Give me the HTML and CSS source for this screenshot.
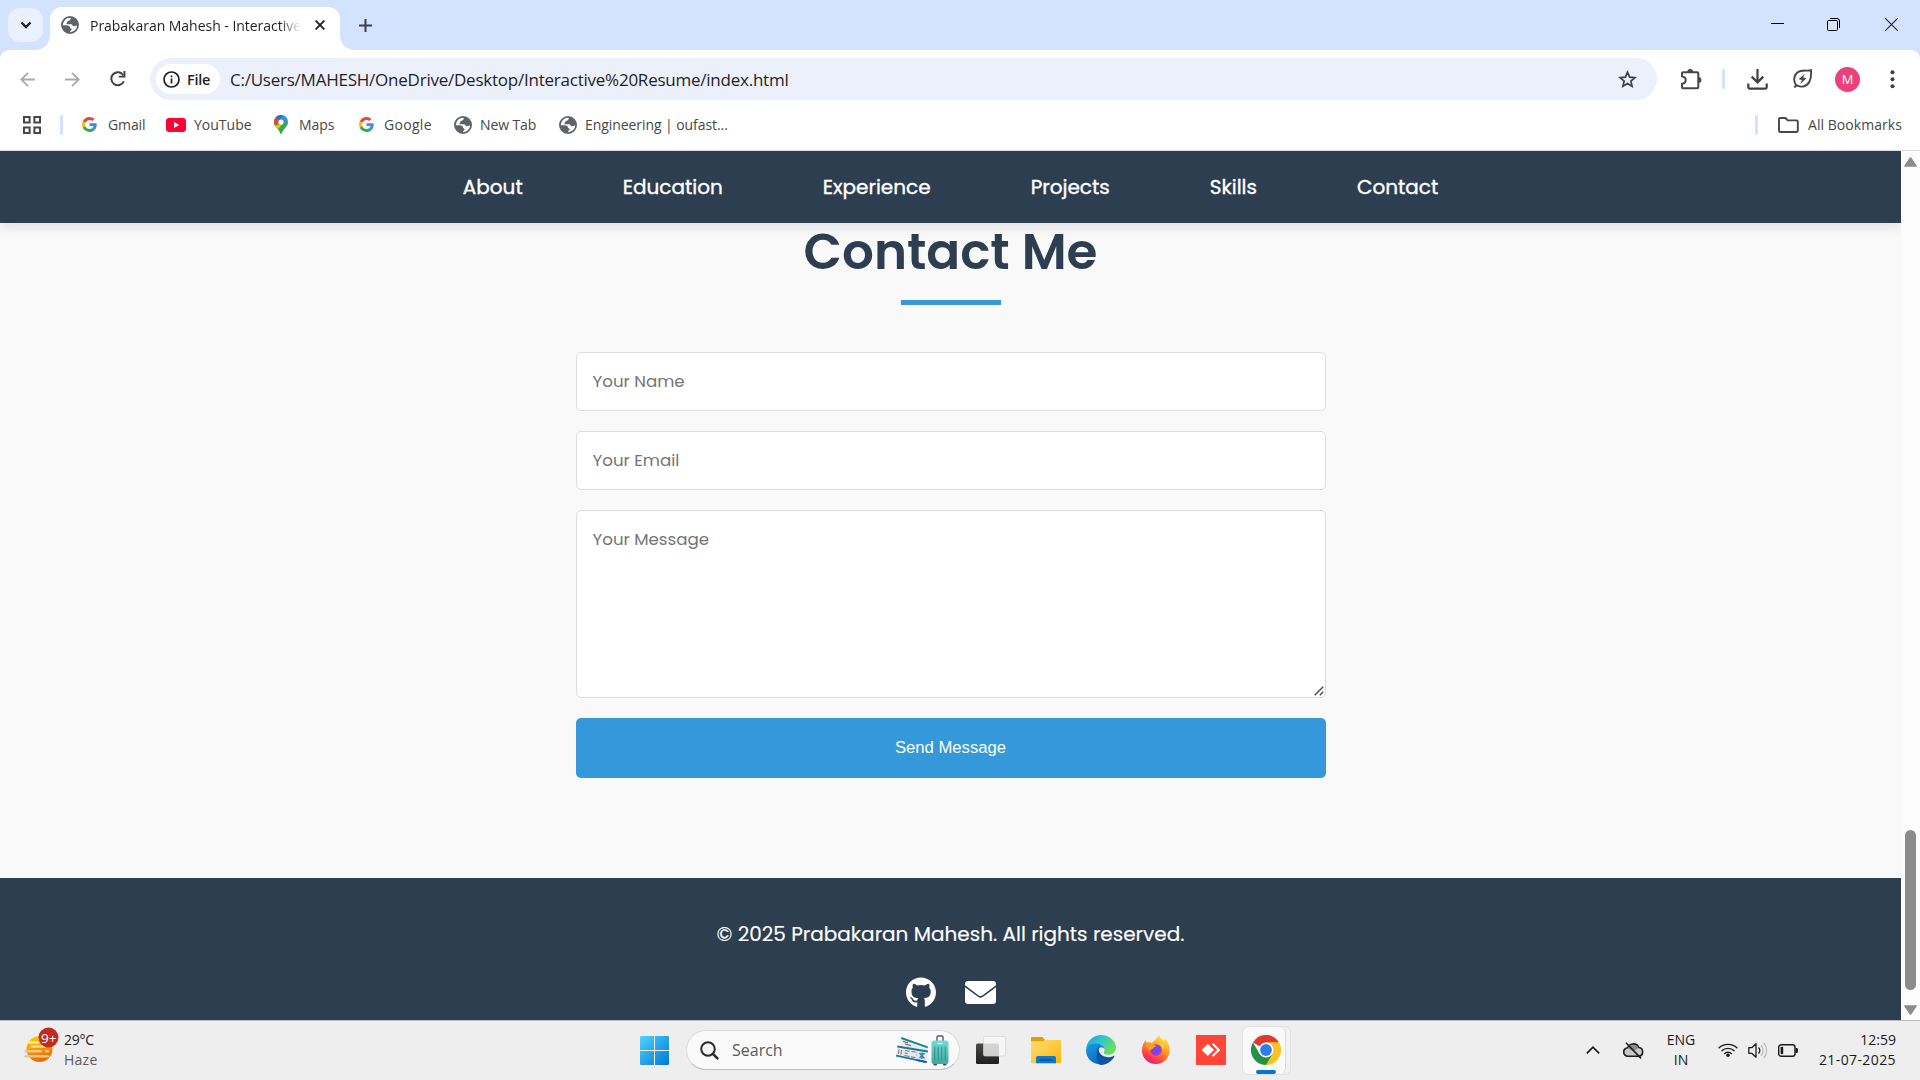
FILE: index.html
```html
<!DOCTYPE html>
<html lang="en">
<head>
<meta charset="utf-8">
<title>Prabakaran Mahesh - Interactive Resume</title>
<link rel="stylesheet" href="styles.css">
</head>
<body>
<svg width="0" height="0" class="defs" aria-hidden="true">
  <defs>
    <linearGradient id="win" x1="0" y1="0" x2="1" y2="1"><stop offset="0" stop-color="#4fd3ff"/><stop offset="1" stop-color="#0078d4"/></linearGradient>
    <linearGradient id="sun" x1="0" y1="0" x2="0.3" y2="1"><stop offset="0" stop-color="#ffd400"/><stop offset="1" stop-color="#ee6a00"/></linearGradient>
    <linearGradient id="fold" x1="0" y1="0" x2="1" y2="1"><stop offset="0" stop-color="#ffdd72"/><stop offset="1" stop-color="#fbb80f"/></linearGradient>
    <linearGradient id="edgeTop" x1="0" y1="0" x2="1" y2=".5"><stop offset="0" stop-color="#1e9fdc"/><stop offset=".5" stop-color="#31c4d0"/><stop offset="1" stop-color="#6be05a"/></linearGradient>
    <linearGradient id="edgeLeft" x1="0" y1="0" x2=".6" y2="1"><stop offset="0" stop-color="#1a9be2"/><stop offset="1" stop-color="#0c6cc4"/></linearGradient>
    <linearGradient id="fox" x1=".8" y1="0" x2=".3" y2="1"><stop offset="0" stop-color="#fff04a"/><stop offset=".45" stop-color="#ff9a1f"/><stop offset=".8" stop-color="#ff3b47"/><stop offset="1" stop-color="#e3168b"/></linearGradient>
    <radialGradient id="foxIn"><stop offset="0" stop-color="#6a4be0"/><stop offset="1" stop-color="#a336d6"/></radialGradient>
    <linearGradient id="dark" x1="0" y1="0" x2="0" y2="1"><stop offset="0" stop-color="#4a4a47"/><stop offset="1" stop-color="#1d1d1d"/></linearGradient>
    <linearGradient id="case" x1="0" y1="0" x2="0" y2="1"><stop offset="0" stop-color="#73dcd0"/><stop offset="1" stop-color="#3fa9a2"/></linearGradient>
    <symbol id="globe" viewBox="0 0 18 18">
      <circle cx="9" cy="9" r="8.100" fill="#fff" stroke="#5f6368" stroke-width="1.800"/>
      <path fill="#5f6368" d="M10 1 9.600 3C9.500 4.200 8 4.600 7 5 6 5.400 6.300 6.800 5.500 7.200 5 8 6 8.400 7.500 8.200H10C11.500 8.300 11.300 10.300 13 10.300 14.500 10.300 15 9.300 17 9.300A8 8 0 0 0 10 1zM1.200 9.300H5.500C8 9.300 9.200 10.500 9 12 11 12.300 11 14 9.800 14.500 9.300 15 9 16.500 8 17A8 8 0 0 1 1.200 9.300z"/>
    </symbol>
    <symbol id="google" viewBox="0 0 48 48">
      <path fill="#ea4335" d="M24 9.500c3.540 0 6.710 1.220 9.210 3.600l6.850-6.850C35.900 2.380 30.470 0 24 0 14.620 0 6.510 5.380 2.560 13.220l7.980 6.190C12.430 13.720 17.740 9.500 24 9.500z"/>
      <path fill="#4285f4" d="M46.980 24.550c0-1.570-.15-3.090-.38-4.550H24v9.020h12.940c-.58 2.960-2.260 5.480-4.780 7.180l7.730 6c4.510-4.180 7.090-10.360 7.090-17.650z"/>
      <path fill="#fbbc05" d="M10.530 28.590c-.48-1.450-.76-2.990-.76-4.590s.27-3.140.76-4.590l-7.980-6.190C.92 16.460 0 20.120 0 24c0 3.880.92 7.540 2.560 10.780l7.970-6.190z"/>
      <path fill="#34a853" d="M24 48c6.480 0 11.930-2.130 15.890-5.810l-7.730-6c-2.150 1.450-4.920 2.300-8.160 2.300-6.260 0-11.570-4.220-13.470-9.910l-7.980 6.190C6.510 42.620 14.620 48 24 48z"/>
    </symbol>
  </defs>
</svg>

<div class="browser">
  <div class="tabstrip">
    <button class="tab-search" aria-label="Search tabs"><svg width="12" height="8" viewBox="0 0 12 8"><path d="M1.500 1.500 6 6l4.500-4.500" fill="none" stroke="#1f1f1f" stroke-width="2.300"/></svg></button>
    <div class="tab">
      <svg width="18" height="18"><use href="#globe"/></svg>
      <span class="tab-title">Prabakaran Mahesh - Interactive</span>
      <svg width="10" height="10" viewBox="0 0 10 10"><path d="M.6.6l8.800 8.800M9.400.6.6 9.400" stroke="#1f1f1f" stroke-width="1.900"/></svg>
    </div>
    <svg class="new-tab" width="13" height="13" viewBox="0 0 13 13"><path d="M6.500 0v13M0 6.500h13" stroke="#3c3f43" stroke-width="2"/></svg>
    <div class="window-buttons">
      <svg width="13" height="13" viewBox="0 0 13 13"><path d="M0 5.500h13" stroke="#000"/></svg>
      <svg width="13" height="13" viewBox="0 0 13 13"><rect x=".5" y="2.500" width="10" height="10" rx="1.200" fill="none" stroke="#000"/><path d="M3 .5h7A2.500 2.500 0 0 1 12.500 3v7" fill="none" stroke="#000"/></svg>
      <svg width="13" height="13" viewBox="0 0 13 13"><path d="M.3.3l12.400 12.400M12.700.3.3 12.700" stroke="#222" stroke-width="1.100"/></svg>
    </div>
  </div>

  <div class="toolbar">
    <svg width="15" height="15" viewBox="0 0 15 15"><path d="M15 7.500H1.500M8 .8 1.300 7.500 8 14.200" fill="none" stroke="#a9abae" stroke-width="1.800"/></svg>
    <svg width="15" height="15" viewBox="0 0 15 15"><path d="M0 7.500h13.500M7 .8l6.700 6.700L7 14.200" fill="none" stroke="#a9abae" stroke-width="1.800"/></svg>
    <svg width="16" height="16" viewBox="0 0 16 16"><path d="M13.800 10.300A6.500 6.500 0 1 1 13.300 4.200" fill="none" stroke="#3c4043" stroke-width="2"/><path d="M15.400 0v6.600H8.800V4.700h4.700V0z" fill="#3c4043"/></svg>
    <div class="omnibox">
      <div class="chip">
        <svg width="17" height="17" viewBox="0 0 17 17"><circle cx="8.500" cy="8.500" r="7.500" fill="none" stroke="#1f1f1f" stroke-width="1.700"/><path d="M8.500 7.600v5M8.500 4.400v1.900" stroke="#1f1f1f" stroke-width="1.700"/></svg>
        <span>File</span>
      </div>
      <span class="url">C:/Users/MAHESH/OneDrive/Desktop/Interactive%20Resume/index.html</span>
      <svg width="19" height="19" viewBox="0 0 19 19"><path d="M9.500 2.200l2.100 4.900 5.300.5-4 3.500 1.200 5.200-4.600-2.800-4.600 2.800 1.200-5.200-4-3.500 5.300-.5z" fill="none" stroke="#3c4043" stroke-width="1.700"/></svg>
    </div>
    <svg class="ext" width="22" height="22" viewBox="0 0 22 22"><path d="M3.800 4.200h13.500a1 1 0 0 1 1 1v14a1 1 0 0 1-1 1H3a1 1 0 0 1-1-1v-3.400c5-1 5-6.600 0-7.600V5.200a1 1 0 0 1 1-1z" fill="none" stroke="#474747" stroke-width="2"/><path d="M7.300 4a2.900 2.900 0 0 1 5.800 0zM18.500 9a2.900 2.900 0 0 1 0 5.800z" fill="#474747"/></svg>
    <i class="sep"></i>
    <svg class="dl" width="21" height="21" viewBox="0 0 21 21"><path d="M10.500 0v13M4.700 7.600l5.800 5.800 5.800-5.800" fill="none" stroke="#3c4043" stroke-width="2.200"/><path d="M1.300 14.500v3.800a1.300 1.300 0 0 0 1.300 1.300h15.800a1.300 1.300 0 0 0 1.300-1.300v-3.800" fill="none" stroke="#3c4043" stroke-width="2.200"/></svg>
    <svg class="leaf" width="20" height="20" viewBox="0 0 20 20"><path d="M2.800 15.800C-.3 10.800 1.300 3.600 7.500 2 11 1.100 15 2 18 1.300c.3 4 .1 8.200-1.600 11.500C13.600 18 7.300 19 2.800 15.800ZM1.300 18.500l2.600-2.800" fill="none" stroke="#474747" stroke-width="1.900"/><path d="M11.700 4.700 5.600 10.300l3.300.8-1.600 4 6.200-5.800-3.400-.8z" fill="#474747"/></svg>
    <span class="avatar">M</span>
    <svg class="dots" width="5" height="19" viewBox="0 0 5 19"><g fill="#3c4043"><circle cx="2.500" cy="2.300" r="2"/><circle cx="2.500" cy="9.300" r="2"/><circle cx="2.500" cy="16.300" r="2"/></g></svg>
  </div>

  <div class="bookmarks">
    <svg class="apps" width="18" height="18" viewBox="0 0 18 18"><path d="M1 1h5.600v5.600H1zM11.400 1H17v5.600h-5.600zM1 11.400h5.600V17H1zM11.400 11.400H17V17h-5.600z" fill="none" stroke="#474747" stroke-width="2"/></svg>
    <i class="sep"></i>
    <a class="bm gmail"><svg width="15" height="15"><use href="#google"/></svg><span>Gmail</span></a>
    <a class="bm youtube"><svg width="20" height="14" viewBox="0 0 20 14"><rect width="20" height="14" rx="3.200" fill="#ff0033"/><path d="M8 4l5.200 3L8 10z" fill="#fff"/></svg><span>YouTube</span></a>
    <a class="bm maps"><svg width="14" height="20" viewBox="0 0 14 20"><path d="M7 0a7 7 0 0 1 7 7c0 5-5 6.500-7 13C5 13.500 0 12 0 7a7 7 0 0 1 7-7z" fill="#34a853"/><path d="M1.600 2.500A7 7 0 0 1 9.200.4L4.700 5.700z" fill="#1a73e8"/><path d="M9.200.4a7 7 0 0 1 4.200 3.700L8.800 9.400 7 7z" fill="#4285f4"/><path d="M1.600 2.500 5.200 5.400.8 10.400A7 7 0 0 1 1.600 2.500z" fill="#ea4335"/><path d="M.8 10.400 9 8.600l-5.300 6z" fill="#fbbc04"/><circle cx="7" cy="7" r="2.600" fill="#fff"/></svg><span>Maps</span></a>
    <a class="bm goog"><svg width="15" height="15"><use href="#google"/></svg><span>Google</span></a>
    <a class="bm newtab"><svg width="18" height="18"><use href="#globe"/></svg><span>New Tab</span></a>
    <a class="bm eng"><svg width="18" height="18"><use href="#globe"/></svg><span>Engineering | oufast...</span></a>
    <i class="sep right"></i>
    <a class="bm all"><svg width="21" height="16" viewBox="0 0 21 16"><path d="M1 2.200A1.200 1.200 0 0 1 2.200 1h5.300l2.200 2.400h8.900a1.200 1.200 0 0 1 1.200 1.200v9.200a1.200 1.200 0 0 1-1.200 1.200H2.200A1.200 1.200 0 0 1 1 13.800z" fill="none" stroke="#474747" stroke-width="1.900"/></svg><span>All Bookmarks</span></a>
  </div>

  <div class="viewport">
    <main class="page">
      <nav class="nav">
        <a>About</a><a>Education</a><a>Experience</a><a>Projects</a><a>Skills</a><a>Contact</a>
      </nav>
      <section class="contact">
        <h2>Contact&nbsp;Me</h2>
        <form>
          <input type="text" placeholder="Your Name">
          <input type="email" placeholder="Your Email">
          <div class="message">
            <textarea placeholder="Your Message"></textarea>
            <svg class="grip" width="10" height="10" viewBox="0 0 10 10"><path d="M.7 9.200 9.200.7M5.800 9.200 9.200 5.800" stroke="#4f4f4f" stroke-width="1.500"/></svg>
          </div>
          <button type="button">Send Message</button>
        </form>
      </section>
      <footer>
        <p>© 2025 Prabakaran Mahesh. All rights reserved.</p>
        <div class="social">
          <svg width="30" height="31" viewBox="0 0 496 512"><path fill="#fff" d="M165.900 397.400c0 2-2.300 3.600-5.200 3.600-3.300.3-5.600-1.300-5.600-3.600 0-2 2.300-3.600 5.200-3.600 3-.3 5.600 1.300 5.600 3.600zm-31.100-4.500c-.7 2 1.300 4.300 4.300 4.900 2.600 1 5.600 0 6.200-2s-1.300-4.300-4.300-5.200c-2.600-.7-5.500.3-6.200 2.300zm44.200-1.700c-2.900.7-4.900 2.600-4.600 4.900.3 2 2.900 3.300 5.900 2.600 2.900-.7 4.900-2.600 4.600-4.600-.3-1.900-3-3.200-5.900-2.900zM244.800 8C106.100 8 0 113.300 0 252c0 110.900 69.800 205.800 169.500 239.200 12.800 2.300 17.300-5.600 17.300-12.100 0-6.200-.3-40.400-.3-61.400 0 0-70 15-84.700-29.800 0 0-11.400-29.100-27.800-36.600 0 0-22.900-15.700 1.600-15.400 0 0 24.900 2 38.600 25.800 21.900 38.600 58.600 27.500 72.900 20.900 2.300-16 8.800-27.100 16-33.700-55.900-6.200-112.300-14.300-112.300-110.500 0-27.500 7.600-41.300 23.600-58.900-2.600-6.500-11.100-33.300 2.600-67.900 20.900-6.500 69 27 69 27 20-5.600 41.500-8.500 62.800-8.500s42.800 2.900 62.800 8.500c0 0 48.100-33.600 69-27 13.700 34.700 5.200 61.400 2.600 67.900 16 17.700 25.800 31.500 25.800 58.900 0 96.500-58.900 104.200-114.800 110.500 9.200 7.900 17 22.900 17 46.400 0 33.700-.3 75.400-.3 83.600 0 6.500 4.600 14.400 17.300 12.100C428.200 457.800 496 362.900 496 252 496 113.300 383.500 8 244.800 8z"/></svg>
          <svg width="31" height="23" viewBox="0 0 31 23"><path fill="#fff" d="M3 0h25a3 3 0 0 1 3 3v1.300L17.300 14.400a3 3 0 0 1-3.600 0L0 4.300V3a3 3 0 0 1 3-3zM0 6.300l12.900 9.400a4.400 4.400 0 0 0 5.200 0L31 6.300V20a3 3 0 0 1-3 3H3a3 3 0 0 1-3-3z"/></svg>
        </div>
      </footer>
    </main>
    <div class="scrollbar">
      <svg width="13" height="10" viewBox="0 0 13 10"><path d="M6.500 1 12 9H1z" fill="#8b8b8b" stroke="#8b8b8b" stroke-width="1.600" stroke-linejoin="round"/></svg>
      <i class="thumb"></i>
      <svg width="13" height="10" viewBox="0 0 13 10"><path d="M6.500 9 12 1H1z" fill="#8b8b8b" stroke="#8b8b8b" stroke-width="1.600" stroke-linejoin="round"/></svg>
    </div>
  </div>
</div>

<div class="taskbar">
  <div class="weather">
    <svg width="36" height="38" viewBox="0 0 36 38"><circle cx="15.500" cy="22" r="13" fill="url(#sun)"/><g stroke="#e3c88d" stroke-width="2.600" stroke-linecap="round"><path d="M3 15.500h11" stroke="#ffe9a0"/><path d="M8 19.500h13" stroke="#f6d98c"/><path d="M1.800 24.300h15M22 24.300h2"/><path d="M1.800 29.300h22"/></g><circle cx="24.500" cy="10.500" r="10" fill="#c42b1c"/><text x="24.700" y="15.500" text-anchor="middle" class="badge-text">9+</text></svg>
    <div class="weather-text"><span class="temp">29°C</span><span class="haze">Haze</span></div>
  </div>
  <svg class="start" width="29" height="29" viewBox="0 0 29 29"><path fill="url(#win)" d="M1 0h13v14H0V1a1 1 0 0 1 1-1zM15 0h13a1 1 0 0 1 1 1v13H15zM0 15h14v14H1a1 1 0 0 1-1-1zM15 15h14v13a1 1 0 0 1-1 1H15z"/></svg>
  <div class="search">
    <svg width="19" height="19" viewBox="0 0 19 19"><circle cx="8" cy="8" r="6.800" fill="#f4f4f4" stroke="#2b2b2b" stroke-width="2"/><path d="M12.900 12.900l4.500 4.500" stroke="#2b2b2b" stroke-width="2.600" stroke-linecap="round"/></svg>
    <span class="search-label">Search</span>
    <svg class="tickets" width="34" height="28" viewBox="0 0 34 28"><path d="M6.500 1 33 10.500 31.500 17 3.500 8z" fill="#efe9e6"/><path d="M6.500 1 33 10.500l-.5 1.800L6 3z" fill="#0e8c8f"/><path d="M8 5.200l5 1.700M10 8l6 1.800" stroke="#6b6670" stroke-width="1.100"/><path d="M2.500 9.500 33 14.500 31.500 27 1 20.500z" fill="#e9e6ea"/><path d="M2.500 9.500 33 14.500l-.3 1.900L2.300 11.400zM1.200 18.700 31.800 25.200 31.500 27 1 20.500z" fill="#117f9c"/><path d="M4 13.500 3.500 18M6.500 14 6 18.500M10 14.500l4.500.8M9.700 17l3 .6M9.500 19.500l5 1M16.500 15.500l4 .7M16 20.800l4 .8" stroke="#77757f" stroke-width="1"/><path d="M22 15.700 20.900 22" stroke="#b9b5c0" stroke-dasharray="1.500 1"/><path d="M24.500 17l5 5.500M29.500 17l-5 5M27.200 16.500l-.5 6.500" stroke="#2c8cae" stroke-width="1.500"/><path d="M22 23.200l9.700 2L31.500 27l-9.800-2z" fill="#1b55a8"/></svg>
    <svg width="18" height="31" viewBox="0 0 18 31"><path d="M6 6V2.200A1.200 1.200 0 0 1 7.200 1h3.600A1.200 1.200 0 0 1 12 2.200V6" fill="none" stroke="#5c5673" stroke-width="1.400"/><rect x="2.500" y="27" width="3.500" height="3.500" rx="1" fill="#4a4560"/><rect x="12" y="27" width="3.500" height="3.500" rx="1" fill="#4a4560"/><rect x=".5" y="5.500" width="17" height="23.500" rx="2.500" fill="url(#case)"/><path d="M3.800 11.500v14M7.200 11.500v14M10.700 11.500v14M14.200 11.500v14" stroke="#2f8f8b" stroke-width="1"/><path d="M6.500 8.500h5" stroke="#b8fff5" stroke-width="1.400"/></svg>
  </div>
  <div class="apps-row">
    <svg width="30" height="30" viewBox="0 0 30 30"><rect x="0" y="8.500" width="23" height="20.500" rx="1.500" fill="url(#dark)"/><rect x="7.500" y="1.500" width="22" height="19.500" rx="1.500" fill="#f7f7f7" fill-opacity=".8" stroke="#d4d4d4" stroke-width=".7"/></svg>
    <svg width="30" height="30" viewBox="0 0 30 30"><path d="M1.200 2h9.500a2 2 0 0 1 1.400.7L14 5v4H0V3.200A1.200 1.200 0 0 1 1.200 2z" fill="#e09f05"/><path d="M0 6.300h12l1.800-1.200H29a1 1 0 0 1 1 1v21.200a1 1 0 0 1-1 1H1a1 1 0 0 1-1-1z" fill="url(#fold)"/><path d="M5 28.300V23a2 2 0 0 1 2-2h16a2 2 0 0 1 2 2v5.300z" fill="#0f78cc"/><path d="M9 25h12" stroke="#084f8c" stroke-width="1.300" stroke-linecap="round"/></svg>
    <svg width="30" height="30" viewBox="0 0 30 30"><path d="M.1 13.200C1.300 5.600 7.500 0 15 0c8.600 0 15 6.200 15 12.500 0 4.600-3.800 7.300-7.500 7.300-3.800 0-5-1.300-4.900-2 .2-.7 1.200-1.200 1-3.200C18.300 11.200 15 9.500 10.800 9.500 5.800 9.500 2 11 .1 13.200z" fill="url(#edgeTop)"/><path d="M0 15.500C.2 10.200 5.500 8.300 10 8.500c5 .2 8.300 3 8.600 6C17.700 13 16.600 12.300 15 12.300c-3 .9-5 5-3.800 9.300 1 3.600 4 6.400 8 7C9.300 31.900 0 24.600 0 15.500z" fill="url(#edgeLeft)"/><path d="M10.800 17c-.3-2.500 1-4.300 2.300-5.300-1.300 3 .2 7.300 3.900 9.300 3.700 1.800 8 1.200 10.200-.1.900-.4 1.400.2 1 .9-2.600 4.800-7.600 8.300-13.600 8.200C9.800 27.500 10.500 21.500 10.800 17z" fill="#1053a0"/></svg>
    <svg width="30" height="30" viewBox="0 0 30 30"><path d="M18 0c1.200 3 2.800 4.200 4.700 6 1.200-.3 1.200-1.600 1.200-2.500 3.500 3.200 5 7.500 4.800 12C28.400 23 22.500 29 15 29 7 29 1 23 1 15.500 1 11.500 2.300 7.500 5 4.700c0 1.400.3 2.200 1 3 1.500-.6 3.200-.6 4.800.2C12.500 6 15.500 4.500 18 0z" fill="url(#fox)"/><circle cx="15" cy="15" r="5.800" fill="url(#foxIn)"/><path d="M4.500 9.500c2.300-1.500 5.200-.9 6.700.7 1.500-.4 3.300 0 4.300 1-1.500.2-2.500.8-3 1.800-.7 1.300-3 1-3.200 2.800C6.900 14.500 5 12 4.500 9.500z" fill="#ff9d2a"/><path d="M16 8c3.700.4 5.800 3 5.600 7 1.300-1.500 1.500-4 .7-6z" fill="#ffd53c"/></svg>
    <svg width="30" height="30" viewBox="0 0 30 30"><path fill="#ff4536" d="M0 0h30v30H0z"/><path d="M11.800 8.700 18 14.900l-6.200 6.200-6.200-6.200z" fill="#fff"/><path d="M15.800 9.300l1.500-1.300 7 6.900-7 6.900-1.500-1.300 5.500-5.600z" fill="#fff"/></svg>
    <div class="active-app">
      <div class="tile"><svg width="30" height="30" viewBox="0 0 30 30"><path d="M15 15 2 7.500A15 15 0 0 1 28 7.500z" fill="#df3a2d"/><path d="M15 15V7.500h13A15 15 0 0 1 15 30z" fill="#fcc31e"/><path d="M15 15 21.500 18.800 15 30A15 15 0 0 1 2 7.500L8.500 18.800z" fill="#249144"/><path d="M15 7.500h13L21 18.700z" fill="#fcc31e"/><circle cx="15" cy="15" r="7.500" fill="#fff"/><circle cx="15" cy="15" r="5.900" fill="#2f7de9"/></svg><i></i></div>
    </div>
  </div>
  <div class="tray">
    <svg class="t-up" width="14" height="8" viewBox="0 0 14 8"><path d="M.8 7.300 7 1.200l6.200 6.100" fill="none" stroke="#1b1b1b" stroke-width="1.700"/></svg>
    <svg class="t-cloud" width="21" height="17" viewBox="0 0 21 17"><path d="M5 14.200a4.200 4.200 0 0 1-.3-8.400A6 6 0 0 1 15.800 5.500a4.400 4.400 0 0 1 .2 8.700z" fill="#c9c9c9" stroke="#1b1b1b" stroke-width="1.600"/><path d="M5 6a6 6 0 0 1 10.500 0l-5.300 3.400z" fill="#8b8b8b"/><path d="M3 .8l15 15.600" stroke="#1b1b1b" stroke-width="1.600"/></svg>
    <div class="lang"><span>ENG</span><span>IN</span></div>
    <svg class="t-wifi" width="20" height="15" viewBox="0 0 20 15"><g fill="none" stroke="#1b1b1b" stroke-width="1.400"><path d="M.6 6.300a13.200 13.200 0 0 1 18.800 0"/><path d="M3.600 9a9.200 9.200 0 0 1 12.800 0"/><path d="M6.300 11.700a5.300 5.300 0 0 1 7.400 0"/></g><circle cx="10" cy="13.200" r="1.800" fill="#1b1b1b"/></svg>
    <svg class="t-vol" width="20" height="17" viewBox="0 0 20 17"><path d="M.8 5.700h3L8 1.800v13.400l-4.200-3.900h-3z" fill="none" stroke="#1b1b1b" stroke-width="1.300" stroke-linejoin="round"/><path d="M10.500 5.500a4.500 4.500 0 0 1 0 6" fill="none" stroke="#1b1b1b" stroke-width="1.300"/><path d="M13 3.300a7.500 7.500 0 0 1 0 10.400M15.700 1a11 11 0 0 1 0 15" fill="none" stroke="#bdbdbd" stroke-width="1.300"/></svg>
    <svg class="t-bat" width="20" height="13" viewBox="0 0 20 13"><rect x=".7" y=".7" width="16.300" height="11.600" rx="2.600" fill="none" stroke="#1b1b1b" stroke-width="1.400"/><rect x="2.600" y="2.700" width="2.600" height="7.600" rx=".8" fill="#1b1b1b"/><path d="M17.500 4h1.200a1.200 1.200 0 0 1 1.200 1.200v2.600A1.200 1.200 0 0 1 18.700 9h-1.200z" fill="#1b1b1b"/></svg>
    <div class="clock"><span>12:59</span><span class="date">21-07-2025</span></div>
  </div>
</div>
</body>
</html>
```
FILE: styles.css
```css
* { box-sizing: border-box; }
html, body { margin: 0; width: 1920px; height: 1080px; overflow: hidden; }
body { display: flex; flex-direction: column; font-family: "Open Sans", "Noto Sans", sans-serif; background: #fff; }
svg { display: block; flex: none; }
.defs { position: absolute; }
span, a { white-space: nowrap; }
button { border: 0; padding: 0; }

.browser { height: 1020px; display: flex; flex-direction: column; background: #d3e2fd; }

/* Tab strip */
.tabstrip { height: 50px; display: flex; align-items: flex-start; padding-left: 8px; }
.tab-search { width: 35px; height: 34px; margin-top: 8px; border-radius: 12px; background: #e9f0fe; display: flex; align-items: center; justify-content: center; }
.tab { position: relative; width: 290px; height: 43px; margin: 7px 0 0 7px; padding: 0 15px 7px 11px; border-radius: 12px 12px 0 0; background: #fff; display: flex; align-items: center; }
.tab::before, .tab::after { content: ""; position: absolute; bottom: 0; width: 14px; height: 14px; }
.tab::before { left: -14px; background: radial-gradient(circle at 0 0, transparent 13.500px, #fff 14px); }
.tab::after { right: -14px; background: radial-gradient(circle at 100% 0, transparent 13.500px, #fff 14px); }
.tab-title { width: 213px; margin: 0 12px 0 11px; font-size: 14px; letter-spacing: -.03px; color: #1f1f1f; -webkit-mask-image: linear-gradient(90deg, #000 89%, transparent 99%); mask-image: linear-gradient(90deg, #000 89%, transparent 99%); }
.new-tab { margin: 19px 0 0 19px; }
.window-buttons { margin: 18px 22px 0 auto; display: flex; gap: 43px; }
.window-buttons svg:last-child { margin-left: 2px; }

/* Toolbar */
.toolbar { height: 58px; padding-left: 20px; display: flex; align-items: center; background: #fff; border-radius: 9px 9px 0 0; }
.toolbar > svg:nth-child(2) { margin-left: 30px; }
.toolbar > svg:nth-child(3) { margin-left: 30px; }
.omnibox { width: 1507px; height: 42px; margin-left: 24px; padding: 0 20px 0 6px; border-radius: 21px; background: #ecf0fa; display: flex; align-items: center; }
.chip { width: 64px; height: 30px; padding-left: 7px; border-radius: 15px; background: #fff; display: flex; align-items: center; gap: 7px; font-size: 14.500px; font-weight: 600; letter-spacing: -.3px; color: #1f1f1f; }
.url { flex: 1; padding-left: 10px; font-size: 17px; letter-spacing: -.235px; color: #1f1f1f; }
.sep { width: 3px; height: 20px; border-radius: 1px; background: #d3e3fd; }
.ext { margin-left: 23px; }
.toolbar .sep { margin-left: 20px; }
.dl { margin-left: 22px; }
.leaf { margin-left: 25px; }
.avatar { width: 25px; height: 25px; margin-left: 22px; border-radius: 50%; background: #ec407a; color: #fff; font: 13px/25px "Open Sans", sans-serif; text-align: center; }
.dots { margin-left: 30px; }

/* Bookmarks */
.bookmarks { height: 43px; padding: 0 18px 9px 23px; display: flex; align-items: center; background: #fff; border-bottom: 1px solid #d9dbde; color: #474747; font-size: 14px; letter-spacing: -.1px; }
.bookmarks .sep { margin-left: 19px; }
.bm { display: flex; align-items: center; gap: 9px; }
.gmail { width: 84px; margin-left: 19px; gap: 11px; }
.youtube { width: 108px; gap: 8px; letter-spacing: 0; }
.maps { width: 85px; gap: 11px; }
.goog { width: 95px; gap: 10px; letter-spacing: .3px; }
.newtab { width: 105px; gap: 8px; }
.eng { gap: 8px; letter-spacing: -.07px; }
.bookmarks .right { margin-left: auto; }
.all { width: 124px; margin-left: 20px; letter-spacing: .05px; }

/* Page */
.viewport { flex: 1; min-height: 0; display: flex; }
.page { width: 1901px; display: flex; flex-direction: column; background: #f9f9f9; overflow: hidden; font-family: "Poppins", "Inter", sans-serif; }
.nav { position: relative; height: 72px; flex: none; display: flex; align-items: center; justify-content: center; gap: 100px; background: #2c3e50; box-shadow: 0 4px 12px rgba(0, 0, 0, .1); color: #fff; font-size: 20px; -webkit-text-stroke: .35px #fff; }
.contact { height: 655px; flex: none; display: flex; flex-direction: column; align-items: center; }
h2 { margin: 0; height: 82px; padding-bottom: 18px; border-bottom: 5px solid #3498db; width: 100px; display: flex; align-items: flex-end; justify-content: center; color: #2c3e50; font-weight: 600; font-size: 50px; line-height: 60px; }
form { width: 750px; margin-top: 47px; display: flex; flex-direction: column; gap: 20px; }
input, textarea { display: block; width: 100%; margin: 0; padding: 0 16px; border: 1px solid #ddd; border-radius: 5px; background: #fff; outline: 0; font: 16.667px "Poppins", "Inter", sans-serif; }
input { height: 59px; }
.message { position: relative; }
textarea { height: 188px; padding-top: 17px; line-height: 24px; resize: none; }
.grip { position: absolute; right: 2px; bottom: 2px; }
::placeholder { color: #757575; opacity: 1; }
form button { height: 60px; border-radius: 5px; background: #3498db; color: #fff; font: 16.667px "Liberation Sans", Arial, sans-serif; }
footer { flex: 1; display: flex; flex-direction: column; align-items: center; background: #2c3e50; color: #fff; }
footer p { margin: 39px 0 0; font-size: 20px; line-height: 34px; -webkit-text-stroke: .15px #fff; }
.social { margin-top: 26px; display: flex; align-items: center; gap: 29px; }
.scrollbar { width: 19px; padding: 6px 3px 5px; background: #fcfcfc; display: flex; flex-direction: column; align-items: center; }
.thumb { width: 11px; height: 160px; margin: auto 0 15px; border-radius: 6px; background: #8b8b8b; }

/* Taskbar */
.taskbar { height: 60px; border-top: 1px solid #b9b9b9; background: #eee; display: flex; align-items: flex-start; color: #1b1b1b; font-size: 14px; }
.weather { width: 640px; padding: 6px 0 0 24px; display: flex; }
.badge-text { font: 13.500px "Open Sans", sans-serif; fill: #fff; }
.weather-text { margin: 3px 0 0 4px; display: flex; flex-direction: column; line-height: 20px; }
.temp { letter-spacing: -.25px; }
.haze { letter-spacing: .25px; color: #5b5b5b; }
.start { margin-top: 15px; }
.search { width: 274px; height: 40px; margin: 9px 0 0 17px; padding: 0 10px 0 13px; border: 1px solid #dcdcdc; border-bottom-color: #bdbdbd; border-radius: 20px; background: #fafafa; display: flex; align-items: center; font-size: 16px; color: #5a5a5a; }
.search-label { width: 176px; padding-left: 13px; }
.search svg:last-child { margin-left: 2px; }
.apps-row { display: flex; align-items: flex-start; gap: 25px; margin: 14px 0 0 16px; }
.active-app { width: 49px; height: 49px; margin: -9px 0 0 -9px; border: 1px solid #e2e2e2; border-radius: 6px; background: #f3f3f3; }
.tile { width: 43px; height: 47px; border-radius: 6px; border-right: 1px solid #dcdcdc; background: #fafafa; display: flex; flex-direction: column; align-items: center; padding: 8px 0 0 4px; }
.tile i { width: 20px; height: 4px; margin-top: 5px; border-radius: 2px; background: #0078d4; }
.tray { margin-left: auto; padding-right: 24px; display: flex; align-items: flex-start; }
.t-up { margin-top: 25px; }
.t-cloud { margin: 21px 0 0 23px; }
.lang { width: 40px; margin: 9px 0 0 17px; display: flex; flex-direction: column; align-items: center; line-height: 20px; }
.t-wifi { margin: 21px 0 0 17px; }
.t-vol { margin: 21px 0 0 10px; }
.t-bat { margin: 23px 0 0 10px; }
.clock { width: 98px; margin-top: 9px; display: flex; flex-direction: column; align-items: flex-end; line-height: 20px; }
.date { letter-spacing: .4px; }
```
